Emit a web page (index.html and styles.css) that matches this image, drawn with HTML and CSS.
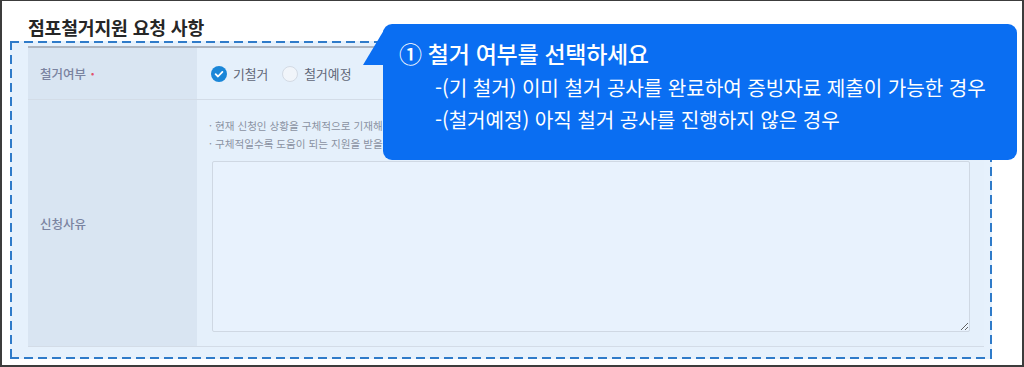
FILE: index.html
```html
<!DOCTYPE html>
<html lang="ko">
<head>
<meta charset="utf-8">
<title>점포철거지원 요청 사항</title>
<link rel="stylesheet" href="styles.css">
</head>
<body>
<div class="frame">
  <h2 class="title">점포철거지원 요청 사항</h2>
  <div class="section">
    <div class="table">
      <div class="row row-status">
        <div class="label">철거여부 <span class="req">•</span></div>
        <div class="cell cell-radio">
          <span class="radio checked">
            <svg viewBox="0 0 16 16" width="16" height="16"><circle cx="8" cy="8" r="8" fill="#1a86d8"/><path d="M4.6 8.2 L7 10.5 L11.4 5.9" fill="none" stroke="#fff" stroke-width="1.8" stroke-linecap="round" stroke-linejoin="round"/></svg>
          </span>
          <span class="radio-text">기철거</span>
          <span class="radio unchecked"></span>
          <span class="radio-text">철거예정</span>
        </div>
      </div>
      <div class="row row-reason">
        <div class="label">신청사유</div>
        <div class="cell cell-reason">
          <p class="hint">· 현재 신청인 상황을 구체적으로 기재해 주시기 바랍니다.</p>
          <p class="hint">· 구체적일수록 도움이 되는 지원을 받을 수 있습니다.</p>
          <textarea class="reason-box"></textarea>
        </div>
      </div>
    </div>
  </div>
  <div class="tooltip">
    <span class="tail"></span>
    <p class="tip-head">① 철거 여부를 선택하세요</p>
    <p class="tip-line">-(기 철거) 이미 철거 공사를 완료하여 증빙자료 제출이 가능한 경우</p>
    <p class="tip-line">-(철거예정) 아직 철거 공사를 진행하지 않은 경우</p>
  </div>
</div>
</body>
</html>
```
FILE: styles.css
```css
* { box-sizing: border-box; }
html, body { margin: 0; padding: 0; background: #fff; }
body { font-family: "Noto Sans CJK KR", "Noto Sans", sans-serif; }

.frame {
  position: relative;
  width: 1024px;
  height: 367px;
  border: 2px solid #3c3c3c;
  border-top-width: 1px;
  background: #fff;
  overflow: hidden;
}

.title {
  margin: 0;
  padding: 14px 0 0 26px;
  height: 40px;
  font-size: 18.3px;
  line-height: 24px;
  font-weight: 700;
  color: #262626;
  letter-spacing: -0.2px;
}

.section {
  margin-left: 8px;
  width: 982px;
  height: 318px;
  padding: 5px 8px 0 18px;
  background-color: #e6f1fc;
  background-image:
    repeating-linear-gradient(90deg, #2f7bc9 0 9px, transparent 9px 14px),
    repeating-linear-gradient(90deg, #2f7bc9 0 9px, transparent 9px 14px),
    repeating-linear-gradient(180deg, #2f7bc9 0 9px, transparent 9px 14px),
    repeating-linear-gradient(180deg, #2f7bc9 0 9px, transparent 9px 14px);
  background-size: 100% 2px, 100% 2px, 2px 100%, 2px 100%;
  background-position: 0 0, 0 100%, 0 0, 100% 0;
  background-repeat: no-repeat;
}

.table {
  border-top: 2px solid #aeb6c1;
  border-bottom: 1px solid #d3dce7;
}

.row { display: flex; }
.row-status { height: 52px; border-bottom: 1px solid #d3dce7; }
.row-reason { height: 246px; }

.label {
  width: 169px;
  flex: none;
  background: #d9e5f2;
  display: flex;
  align-items: center;
  padding-left: 12px;
  font-size: 12.5px;
  font-weight: 500;
  color: #7a83a0;
  gap: 5px;
}
.req { color: #e2506c; font-size: 9px; }

.cell { flex: 1; background: #e5f0fb; }

.cell-radio {
  display: flex;
  align-items: center;
  padding-left: 14px;
  font-size: 12.8px;
  color: #5f6677;
}
.radio { width: 16px; height: 16px; flex: none; display: block; }
.radio svg { display: block; }
.radio.unchecked {
  border: 1px solid #d3dae4;
  border-radius: 50%;
  background: #f1f5fa;
  margin-left: 14px;
}
.radio-text { margin-left: 6px; }

.cell-reason {
  display: flex;
  flex-direction: column;
  padding: 17px 14px 14px 12px;
}
.hint {
  margin: 0;
  font-size: 10.6px;
  line-height: 18px;
  color: #8a92a2;
  white-space: nowrap;
}
.reason-box {
  margin: 8px 0 0 3px;
  flex: 1;
  width: auto;
  border: 1px solid #cfd8e3;
  border-radius: 2px;
  background: #e8f2fd;
  resize: both;
  outline: none;
}

.tooltip {
  position: absolute;
  left: 381px;
  top: 23px;
  width: 634px;
  height: 136px;
  background: #0a6ef2;
  border-radius: 9px;
  color: #fff;
  padding: 14px 0 0 16px;
}
.tail {
  position: absolute;
  left: -20px;
  top: 6px;
  width: 21px;
  height: 35px;
  background: #0a6ef2;
  clip-path: polygon(100% 0, 100% 100%, 0 100%);
}
.tip-head {
  margin: 0 0 4px;
  font-size: 23px;
  line-height: 30px;
  font-weight: 500;
  letter-spacing: -0.3px;
}
.tip-line {
  margin: 0 0 0 36px;
  font-size: 20.2px;
  line-height: 32px;
  letter-spacing: -0.1px;
}
```
